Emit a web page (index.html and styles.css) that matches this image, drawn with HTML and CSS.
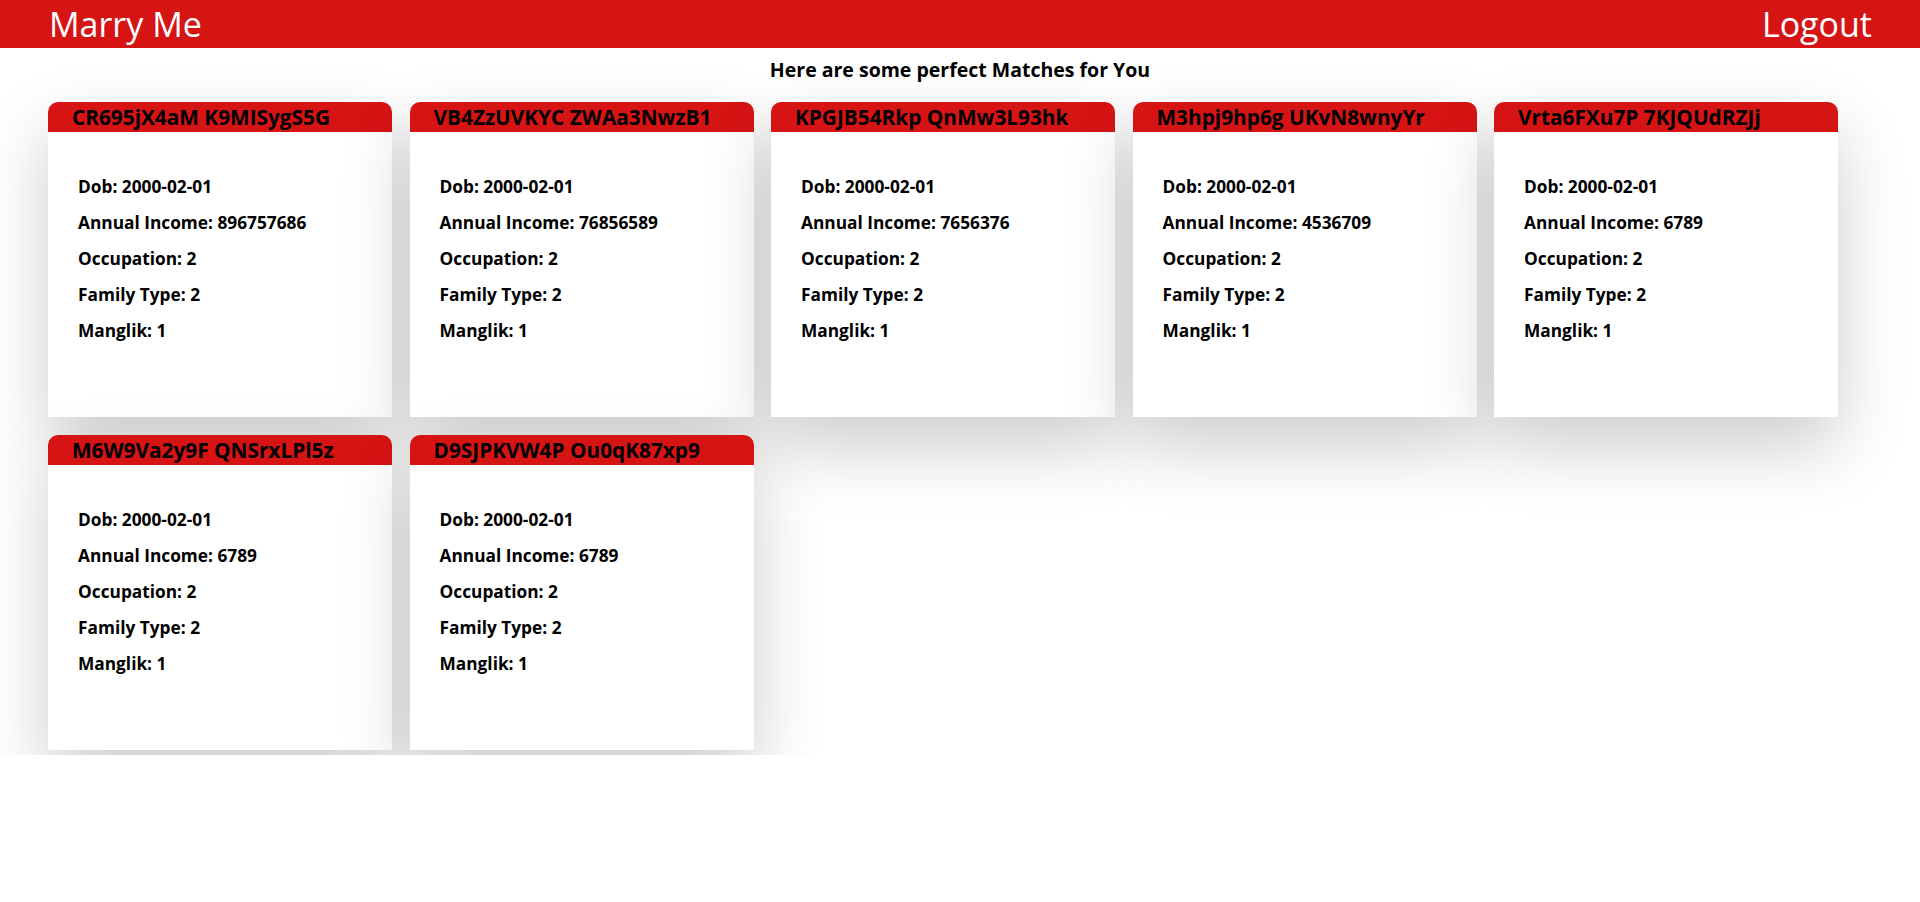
FILE: index.html
```html
<!DOCTYPE html>
<html lang="en">
<head>
<meta charset="utf-8">
<title>Marry Me</title>
<link rel="stylesheet" href="styles.css">
</head>
<body>
<header class="topbar">
  <span class="brand">Marry Me</span>
  <span class="logout">Logout</span>
</header>
<main class="matches">
  <h3 class="matches-title">Here are some perfect Matches for You</h3>
  <div class="card-grid">
    <div class="card">
      <div class="card-head">CR695jX4aM K9MISygS5G</div>
      <div class="card-body">
        <p>Dob: 2000-02-01</p>
        <p>Annual Income: 896757686</p>
        <p>Occupation: 2</p>
        <p>Family Type: 2</p>
        <p>Manglik: 1</p>
      </div>
    </div>
    <div class="card">
      <div class="card-head">VB4ZzUVKYC ZWAa3NwzB1</div>
      <div class="card-body">
        <p>Dob: 2000-02-01</p>
        <p>Annual Income: 76856589</p>
        <p>Occupation: 2</p>
        <p>Family Type: 2</p>
        <p>Manglik: 1</p>
      </div>
    </div>
    <div class="card">
      <div class="card-head">KPGJB54Rkp QnMw3L93hk</div>
      <div class="card-body">
        <p>Dob: 2000-02-01</p>
        <p>Annual Income: 7656376</p>
        <p>Occupation: 2</p>
        <p>Family Type: 2</p>
        <p>Manglik: 1</p>
      </div>
    </div>
    <div class="card">
      <div class="card-head">M3hpj9hp6g UKvN8wnyYr</div>
      <div class="card-body">
        <p>Dob: 2000-02-01</p>
        <p>Annual Income: 4536709</p>
        <p>Occupation: 2</p>
        <p>Family Type: 2</p>
        <p>Manglik: 1</p>
      </div>
    </div>
    <div class="card">
      <div class="card-head">Vrta6FXu7P 7KJQUdRZJj</div>
      <div class="card-body">
        <p>Dob: 2000-02-01</p>
        <p>Annual Income: 6789</p>
        <p>Occupation: 2</p>
        <p>Family Type: 2</p>
        <p>Manglik: 1</p>
      </div>
    </div>
    <div class="card">
      <div class="card-head">M6W9Va2y9F QNSrxLPl5z</div>
      <div class="card-body">
        <p>Dob: 2000-02-01</p>
        <p>Annual Income: 6789</p>
        <p>Occupation: 2</p>
        <p>Family Type: 2</p>
        <p>Manglik: 1</p>
      </div>
    </div>
    <div class="card">
      <div class="card-head">D9SJPKVW4P Ou0qK87xp9</div>
      <div class="card-body">
        <p>Dob: 2000-02-01</p>
        <p>Annual Income: 6789</p>
        <p>Occupation: 2</p>
        <p>Family Type: 2</p>
        <p>Manglik: 1</p>
      </div>
    </div>
  </div>
</main>
</body>
</html>
```

FILE: styles.css
```css
html, body {
  margin: 0;
  padding: 0;
  background: #ffffff;
}

body {
  font-family: "Open Sans", "Noto Sans", sans-serif;
  color: #000000;
}

.topbar {
  display: flex;
  justify-content: space-between;
  align-items: center;
  height: 48px;
  padding: 0 48px 0 49px;
  background: #d71414;
  color: #ffffff;
  font-size: 34px;
  font-weight: 400;
  line-height: 48px;
}

.matches {
  overflow: hidden;
  padding: 0 48px 5px 48px;
}

.matches-title {
  margin: 9px 0 19px;
  text-align: center;
  font-size: 19.5px;
  font-weight: 700;
  line-height: 26px;
}

.card-grid {
  display: flex;
  flex-wrap: wrap;
  column-gap: 17.5px;
  row-gap: 18px;
}

.card {
  width: 344px;
  height: 315px;
  background: #ffffff;
  border-radius: 10px 10px 0 0;
  box-shadow: 0 30px 70px rgba(0, 0, 0, 0.2);
}

.card-head {
  height: 30px;
  padding-left: 24px;
  background: #d71414;
  border-radius: 10px 10px 0 0;
  font-size: 20.8px;
  font-weight: 700;
  line-height: 30px;
  white-space: nowrap;
}

.card-body {
  padding: 29px 30px 0;
}

.card-body p {
  margin: 16px 0;
  font-size: 17.3px;
  font-weight: 700;
  line-height: 20px;
}
```
